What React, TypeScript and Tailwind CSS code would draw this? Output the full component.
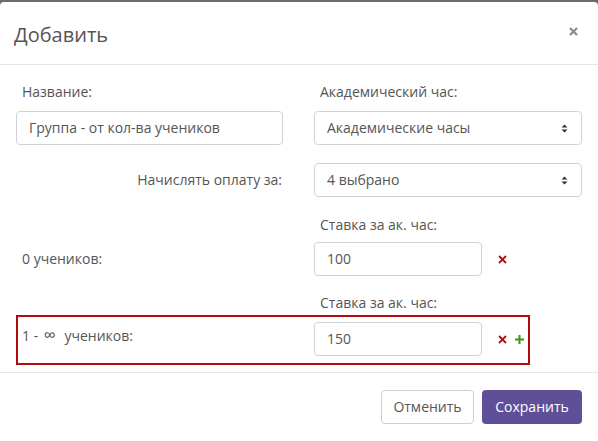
const font = { fontFamily: '"Open Sans", "Liberation Sans", sans-serif' };

function SortIcon() {
	return (
		<svg width="7" height="9" viewBox="0 0 7 9" className="text-[#333]">
			<path d="M0.5 3.5 L3.5 0.5 L6.5 3.5 Z M0.5 5.5 L3.5 8.5 L6.5 5.5 Z" fill="currentColor" />
		</svg>
	);
}

function Select({ value }: { value: string }) {
	return (
		<div className="flex h-[34px] w-[268px] items-center justify-between rounded border border-[#cfd3d9] pl-3 pr-[13px] text-sm text-[#555]">
			<span>{value}</span>
			<SortIcon />
		</div>
	);
}

function TextInput({ value, className }: { value: string; className: string }) {
	return (
		<div
			className={
				"flex h-[34px] items-center rounded border border-[#cfd3d9] px-3 text-sm text-[#555] " +
				className
			}
		>
			{value}
		</div>
	);
}

function RemoveIcon() {
	return (
		<svg width="9" height="9" viewBox="0 0 9 9">
			<path d="M1 1 L8 8 M8 1 L1 8" stroke="#a31515" strokeWidth="1.8" />
		</svg>
	);
}

function AddIcon() {
	return (
		<svg width="9" height="9" viewBox="0 0 9 9">
			<path d="M4.5 0 V9 M0 4.5 H9" stroke="#3d9a12" strokeWidth="2" />
		</svg>
	);
}

export default function App() {
	return (
		<div className="h-[441px] w-[598px] overflow-hidden bg-[#6b6b6b] pt-[2px]" style={font}>
			<div className="h-full rounded-t bg-white">
				<header className="flex h-[63px] items-center justify-between border-b border-[#e5e5e5] pl-[14px] pr-[20px]">
					<h1 className="mt-[3px] text-[20px] text-[#555]">Добавить</h1>
					<svg width="9" height="9" viewBox="0 0 9 9" className="mb-[4px]">
						<path d="M1 1 L8 8 M8 1 L1 8" stroke="#8a8a8a" strokeWidth="2.2" />
					</svg>
				</header>

				<main className="pl-[16px] pr-[16px] pt-[17px]">
					<div className="flex gap-[31px]">
						<div className="w-[267px]">
							<div className="pl-[6px] text-sm leading-5 text-[#555]">Название:</div>
							<TextInput value="Группа - от кол-ва учеников" className="mt-[9px] w-[267px]" />
						</div>
						<div>
							<div className="pl-[6px] text-sm leading-5 text-[#555]">Академический час:</div>
							<div className="mt-[9px]">
								<Select value="Академические часы" />
							</div>
						</div>
					</div>

					<div className="mt-[18px] flex items-center gap-[31px]">
						<div className="w-[267px] pr-[1px] text-right text-sm text-[#555]">Начислять оплату за:</div>
						<Select value="4 выбрано" />
					</div>

					<div className="mt-[18px] pl-[304px] text-sm leading-5 text-[#555]">Ставка за ак. час:</div>
					<div className="mt-[7px] flex items-center">
						<div className="w-[298px] pl-[6px] text-sm text-[#555]">0 учеников:</div>
						<TextInput value="100" className="w-[168px]" />
						<div className="ml-[16px] flex items-center">
							<RemoveIcon />
						</div>
					</div>

					<div className="mt-[17px] pl-[304px] text-sm leading-5 text-[#555]">Ставка за ак. час:</div>
					<div className="mt-[2px] flex h-[50px] w-[514px] items-start border-2 border-[#b30b0b] pt-[5px]">
						<div className="w-[296px] pl-[4px] pt-[3px] text-sm leading-5 text-[#555]">
							1 - <span className="ml-[2px] mr-[5px] text-[17px]">∞</span> учеников:
						</div>
						<TextInput value="150" className="w-[168px]" />
						<div className="ml-[16px] flex h-[34px] items-center gap-[8px]">
							<RemoveIcon />
							<AddIcon />
						</div>
					</div>
				</main>

				<footer className="mt-[7px] flex justify-end gap-[8px] border-t border-[#e5e5e5] pr-[16px] pt-[17px]">
					<button className="h-[34px] w-[93px] rounded border border-[#cfcfcf] bg-white text-sm text-[#555]">
						Отменить
					</button>
					<button className="h-[34px] w-[100px] rounded bg-[#5f4f98] text-sm text-white">
						Сохранить
					</button>
				</footer>
			</div>
		</div>
	);
}
